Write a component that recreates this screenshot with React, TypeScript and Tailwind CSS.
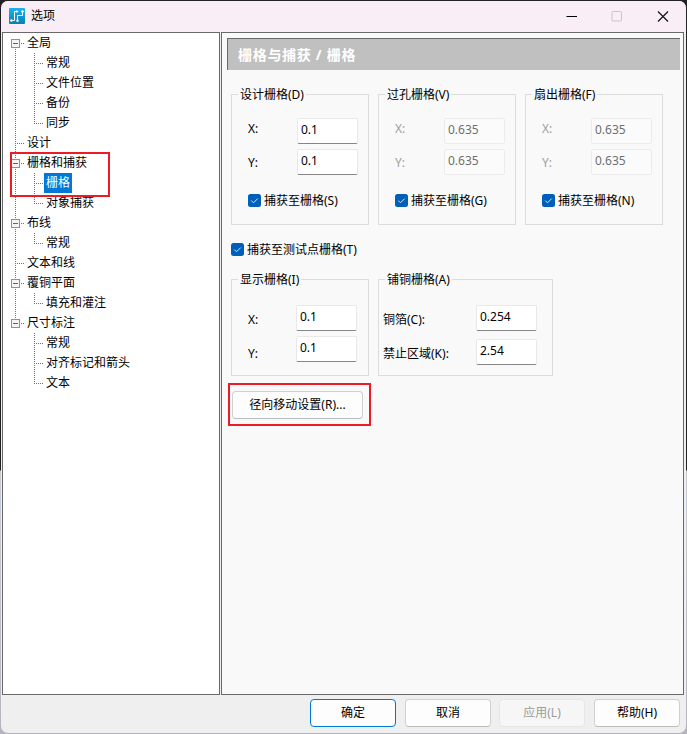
import React from "react";

type TreeItem = {
  text: string;
  level: 0 | 1;
  expandable?: boolean;
  selected?: boolean;
  last?: boolean;
  trunk?: boolean;
};

const tree: TreeItem[] = [
  { text: "全局", level: 0, expandable: true },
  { text: "常规", level: 1, trunk: true },
  { text: "文件位置", level: 1, trunk: true },
  { text: "备份", level: 1, trunk: true },
  { text: "同步", level: 1, last: true, trunk: true },
  { text: "设计", level: 0 },
  { text: "栅格和捕获", level: 0, expandable: true },
  { text: "栅格", level: 1, selected: true, trunk: true },
  { text: "对象捕获", level: 1, last: true, trunk: true },
  { text: "布线", level: 0, expandable: true },
  { text: "常规", level: 1, last: true, trunk: true },
  { text: "文本和线", level: 0 },
  { text: "覆铜平面", level: 0, expandable: true },
  { text: "填充和灌注", level: 1, last: true, trunk: true },
  { text: "尺寸标注", level: 0, expandable: true, last: true },
  { text: "常规", level: 1 },
  { text: "对齐标记和箭头", level: 1 },
  { text: "文本", level: 1, last: true },
];

// Dotted connector lines and the collapse box of one tree row.
function Guides({ item, first }: { item: TreeItem; first: boolean }) {
  const child = item.level === 1;
  const dots = { stroke: "#707070", strokeDasharray: "1 1", fill: "none" };
  return (
    <svg
      width={child ? 41 : 24}
      height="20"
      className="shrink-0"
      shapeRendering="crispEdges"
    >
      {child ? (
        <>
          {item.trunk && <path d="M12.5 0V20" {...dots} />}
          <path d={item.last ? "M31.5 0V10" : "M31.5 0V20"} {...dots} />
          <path d="M31 10.5H40" {...dots} />
        </>
      ) : (
        <>
          <path
            d={`M12.5 ${first ? 10 : 0}V${item.last ? 10 : 20}`}
            {...dots}
          />
          <path d="M12 10.5H22" {...dots} />
        </>
      )}
      {item.expandable && (
        <>
          <rect x="8.5" y="6.5" width="8" height="8" fill="#f4f4f4" stroke="#919191" />
          <path d="M10 10.5H15" stroke="#4b63a7" />
        </>
      )}
    </svg>
  );
}

function Row({ item, first }: { item: TreeItem; first: boolean }) {
  return (
    <li className="flex h-5 leading-5">
      <Guides item={item} first={first} />
      <span
        className={
          item.selected
            ? "bg-[#0078d7] px-[2px] text-white"
            : item.level === 1
              ? "px-[2px]"
              : ""
        }
      >
        {item.text}
      </span>
    </li>
  );
}

function Group({
  title,
  className,
  children,
}: {
  title: string;
  className: string;
  children: React.ReactNode;
}) {
  return (
    <section className={`border border-[#dcdcdc] ${className}`}>
      <h2 className="-mt-[10px] ml-[6px] h-5 w-fit bg-[#f9f9f9] px-[2px] leading-5">
        {title}
      </h2>
      {children}
    </section>
  );
}

function Field({ value, disabled }: { value: string; disabled?: boolean }) {
  return (
    <div
      className={
        disabled
          ? "h-[26px] w-[61px] rounded-[2px] border border-[#ececec] bg-[#fbfbfb] pl-[3px] leading-[22px] text-[#6f6f6f]"
          : "h-[26px] w-[61px] rounded-[2px] border border-[#e8e8e8] border-b-[#868686] bg-white pl-[3px] leading-[22px] text-black"
      }
    >
      {value}
    </div>
  );
}

function Check({ label }: { label: string }) {
  return (
    <div className="flex h-5 items-start gap-[3px] leading-5">
      <svg width="13" height="13" viewBox="0 0 13 13" className="mt-[3px]">
        <rect width="13" height="13" rx="2.5" fill="#005fb8" />
        <path d="M3.3 6.6L5.5 8.8L9.7 4.6" fill="none" stroke="#d5e6f5" strokeWidth="1" />
      </svg>
      <span>{label}</span>
    </div>
  );
}

function GridGroup({
  title,
  value,
  check,
  disabled,
}: {
  title: string;
  value: string;
  check: string;
  disabled?: boolean;
}) {
  return (
    <Group title={title} className="h-[131px] w-[138px]">
      <div className="flex justify-between pl-4 pr-[10px]">
        <div
          className={
            disabled
              ? "flex flex-col gap-[14px] pt-[14px] leading-5 text-[#a0a0a0]"
              : "flex flex-col gap-[14px] pt-[14px] leading-5"
          }
        >
          <span>X:</span>
          <span>Y:</span>
        </div>
        <div className="flex flex-col gap-[5px] pt-[13px]">
          <Field value={value} disabled={disabled} />
          <Field value={value} disabled={disabled} />
        </div>
      </div>
      <div className="mt-4 pl-4">
        <Check label={check} />
      </div>
    </Group>
  );
}

function PushButton({
  label,
  kind = "normal",
}: {
  label: string;
  kind?: "normal" | "default" | "disabled";
}) {
  const look = {
    normal: "border-[#d0d0d0] border-b-[#bcbcbc] bg-[#fdfdfd]",
    default: "border-[#0078d4] bg-[#fdfdfd]",
    disabled: "border-[#e6e6e6] bg-[#f6f6f6] text-[#9d9d9d]",
  }[kind];
  return (
    <button
      className={`h-7 w-[86px] rounded-[4px] border leading-[26px] ${look}`}
    >
      {label}
    </button>
  );
}

export default function App() {
  return (
    <div className="h-[734px] w-[687px] overflow-hidden bg-[linear-gradient(#242124_0px,#242124_470px,#cbcad0_471px,#cbcad0_490px,#bfcbd8_494px,#bfcbd8_512px,#cbcad0_514px,#b4b4c0_734px)] p-px text-[12px] text-black [font-family:'Noto_Sans','Noto_Sans_CJK_SC',sans-serif]">
      <div className="flex h-[732px] w-[685px] flex-col overflow-hidden rounded-[7px] bg-[#efefef]">
        <header className="flex h-[31px] shrink-0 items-center bg-[#f9eef6] pl-2">
          <svg width="16" height="16" viewBox="0 0 16 16" className="-mt-[2px]">
            <defs>
              <linearGradient id="brand" x1="0" y1="0" x2="0" y2="1">
                <stop offset="0" stopColor="#18b4ee" />
                <stop offset="1" stopColor="#087fb4" />
              </linearGradient>
            </defs>
            <rect width="16" height="16" rx="1" fill="url(#brand)" />
            <g fill="none" stroke="#fff" strokeWidth="1">
              <path d="M2.5 12.5H5.5V3.5H8" />
              <path d="M8.5 13V7.5H13.5V4" />
            </g>
            <g fill="#fff">
              <circle cx="2.4" cy="12.5" r="1.2" />
              <path d="M9.6 3.5L7.4 2V5Z" />
              <circle cx="8.5" cy="12.8" r="1.2" />
              <circle cx="13.5" cy="3.4" r="1.2" />
            </g>
          </svg>
          <h1 className="-mt-[2px] ml-[6px] leading-5">选项</h1>
          <svg width="103" height="11" viewBox="0 0 103 11" className="-mt-px ml-auto mr-[17px]" fill="none">
            <path d="M0.5 5.5H11" stroke="#000" />
            <rect x="46" y="0.5" width="9.5" height="9.5" rx="1" stroke="#cdc2ca" />
            <path d="M92 0.5L102 10.5M102 0.5L92 10.5" stroke="#111" strokeWidth="1.15" />
          </svg>
        </header>

        <main className="flex h-[663px] shrink-0 gap-px pl-px pr-[2px]">
          <nav className="relative w-[218px] shrink-0 border border-[#696969] bg-white">
            <ul>
              {tree.map((item, i) => (
                <Row key={i} item={item} first={i === 0} />
              ))}
            </ul>
            <div className="absolute left-[7px] top-[119px] h-[45px] w-[100px] border-2 border-[#ed1c24]" />
          </nav>

          <section className="flex grow flex-col border border-[#696969] bg-[#f9f9f9] pl-[5px] pt-[5px]">
            <div className="h-8 w-[453px] border-l border-t border-[#696969] bg-[#c0c0c0] pl-[10px] text-[14px] leading-[32px] font-bold tracking-[0.7px] text-white">
              栅格与捕获 / 栅格
            </div>

            <div className="mt-6 flex gap-[9px] pl-1">
              <GridGroup title="设计栅格(D)" value="0.1" check="捕获至栅格(S)" />
              <GridGroup title="过孔栅格(V)" value="0.635" check="捕获至栅格(G)" disabled />
              <GridGroup title="扇出栅格(F)" value="0.635" check="捕获至栅格(N)" disabled />
            </div>

            <div className="mt-[15px] pl-1">
              <Check label="捕获至测试点栅格(T)" />
            </div>

            <div className="mt-[19px] flex gap-[9px] pl-1">
              <Group title="显示栅格(I)" className="h-[97px] w-[138px]">
                <div className="flex justify-between pl-4 pr-[11px]">
                  <div className="flex flex-col gap-[14px] pt-5 leading-5">
                    <span>X:</span>
                    <span>Y:</span>
                  </div>
                  <div className="flex flex-col gap-[5px] pt-[15px]">
                    <Field value="0.1" />
                    <Field value="0.1" />
                  </div>
                </div>
              </Group>
              <Group title="铺铜栅格(A)" className="h-[97px] w-[175px]">
                <div className="flex justify-between pl-1 pr-[15px]">
                  <div className="flex flex-col gap-[14px] pt-5 leading-5">
                    <span>铜箔(C):</span>
                    <span>禁止区域(K):</span>
                  </div>
                  <div className="flex flex-col gap-2 pt-[15px]">
                    <Field value="0.254" />
                    <Field value="2.54" />
                  </div>
                </div>
              </Group>
            </div>

            <div className="ml-px mt-[7px] h-[43px] w-[143px] border-2 border-[#ed1c24] pl-[2px] pt-[6px]">
              <button className="block h-7 w-[131px] rounded-[4px] border border-[#d0d0d0] border-b-[#bcbcbc] bg-[#fdfdfd] leading-[26px]">
                径向移动设置(R)...
              </button>
            </div>
          </section>
        </main>

        <footer className="flex gap-[9px] pl-[309px] pt-1">
          <PushButton label="确定" kind="default" />
          <PushButton label="取消" />
          <div className="-ml-px">
            <PushButton label="应用(L)" kind="disabled" />
          </div>
          <PushButton label="帮助(H)" />
        </footer>
      </div>
    </div>
  );
}
